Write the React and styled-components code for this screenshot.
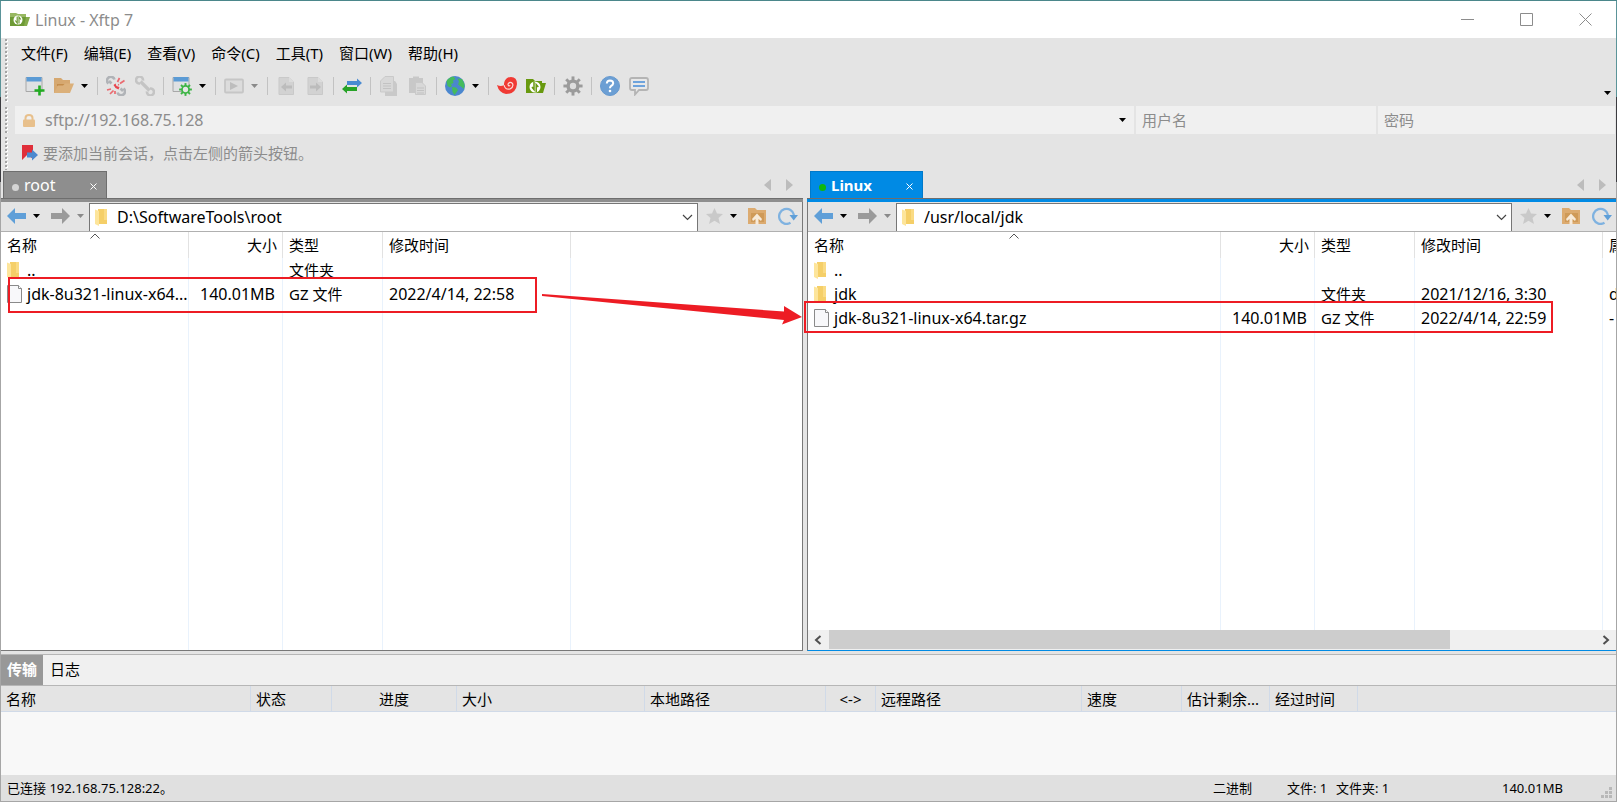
import React from "react";
import styled, { createGlobalStyle, css } from "styled-components";

const GlobalStyle = createGlobalStyle`
  *, *::before, *::after { box-sizing: border-box; }
  body { margin: 0; }
  body, button, input, table {
    font-family: "Noto Sans", "Noto Sans CJK SC", sans-serif;
    font-size: 15px;
    line-height: 20px;
    color: #000;
  }
  button { border: 0; padding: 0; background: none; }
  input { border: 0; padding: 0; outline: 0; background: none; min-width: 0; }
  svg { display: block; flex: none; }
`;

/* ---------- window frame ---------- */

const Window = styled.div`
  display: flex;
  flex-direction: column;
  min-height: 100vh;
  padding: 1px;
  background:
    linear-gradient(#4b878b, #4b878b) top / 100% 1px no-repeat,
    linear-gradient(#5b9499 0 97px, #3c3c40 97px 182px, #a6a6a6 182px);
`;

const TitleBar = styled.header`
  display: flex;
  align-items: center;
  height: 37px;
  padding: 0 1px 0 9px;
  background: #fff;
`;

const Title = styled.h1`
  margin: 0 auto 0 4px;
  font-size: 16px;
  font-weight: 400;
  color: #8c8c8c;
`;

const CaptionButton = styled.button`
  display: grid;
  place-items: center;
  width: 59px;
  height: 37px;
`;

const Chrome = styled.div`
  background: #e4e4e4;
`;

const Band = styled.div`
  display: flex;
  padding: ${(p) => p.$pad || "0"};
`;

const Grip = styled.span`
  flex: none;
  width: 3px;
  margin: 1px 7px 1px 4px;
  background:
    linear-gradient(#a4a4a4 0 2px, transparent 2px) 0 0 / 2px 4px repeat-y,
    linear-gradient(#fff 0 2px, transparent 2px) 1px 1px / 2px 4px repeat-y;
`;

const BandBody = styled.div`
  flex: 1;
  min-width: 0;
`;

const MenuBar = styled.nav`
  display: flex;
  gap: 16px;
  height: 31px;
  padding: 0 0 2px 6px;
  align-items: center;
`;

const MenuItem = styled.button`
  white-space: nowrap;
`;

const Toolbar = styled.div`
  display: flex;
  align-items: center;
  height: 34px;
  padding: 0 1px 0 5px;
`;

const ToolButton = styled.button`
  display: grid;
  place-items: center;
  width: 29px;
  height: 28px;
`;

const DropButton = styled.button`
  display: flex;
  align-items: center;
  width: 15px;
  height: 28px;
  padding-left: 3px;
`;

const OverflowButton = styled(DropButton)`
  align-items: flex-end;
  margin-left: auto;
  padding: 0 0 5px 4px;
`;

const Divider = styled.span`
  width: 1px;
  height: 18px;
  margin: 0 3px 0 4px;
  background: #c2c2c2;
`;

const AddressRow = styled.div`
  display: grid;
  grid-template-columns: minmax(0, 1119fr) minmax(0, 240fr) minmax(0, 237fr);
  gap: 2px;
  flex: 1;
  height: 28px;
  padding-right: 1px;
`;

const Field = styled.label`
  display: flex;
  align-items: center;
  min-width: 0;
  padding: 0 3px 0 ${(p) => p.$indent}px;
  background: #f0f0f0;
  input {
    flex: 1;
    color: #8c8c8c;
    font-size: ${(p) => p.$size || 15}px;
    margin-left: ${(p) => p.$gap || 0}px;
  }
  input::placeholder { color: #8c8c8c; opacity: 1; }
`;

const Hint = styled.p`
  display: flex;
  align-items: center;
  gap: 5px;
  flex: 1;
  height: 35px;
  margin: 0;
  padding: 0 0 1px 7px;
  color: #8c8c8c;
`;

/* ---------- file panes ---------- */

const Panes = styled.main`
  display: flex;
  gap: 4px;
  flex: 1;
  background: #e4e4e4;
`;

const Pane = styled.section`
  position: relative;
  display: flex;
  flex-direction: column;
  flex: ${(p) => p.$grow} 1 0;
  min-width: 0;
`;

const TabStrip = styled.div`
  display: flex;
  align-items: center;
  height: 27px;
  padding: 0 10px 0 ${(p) => (p.$remote ? 3 : 2)}px;
`;

const Tab = styled.div`
  display: flex;
  align-items: center;
  width: ${(p) => (p.$active ? 113 : 104)}px;
  height: 27px;
  padding: 0 4px 0 8px;
  border: 1px solid ${(p) => (p.$active ? "#0079c9" : "#6e6e6e")};
  border-bottom: 0;
  background: ${(p) => (p.$active ? "#008ae4" : "#8e8e8e")};
`;

const Dot = styled.span`
  width: 7px;
  height: 7px;
  margin-top: 4px;
  border-radius: 50%;
  background: ${(p) => p.$color};
`;

const TabLabel = styled.button`
  flex: 1;
  margin-left: 5px;
  text-align: left;
  font-size: ${(p) => (p.$active ? 15 : 16)}px;
  font-weight: ${(p) => (p.$active ? 700 : 400)};
  color: #fff;
`;

const TabClose = styled.button`
  display: grid;
  place-items: center;
  width: 18px;
  height: 18px;
  padding-top: 2px;
`;

const TabScroll = styled.div`
  display: flex;
  gap: 15px;
  margin-left: auto;
  button { width: 7px; }
`;

const PaneBar = styled.div`
  height: 4px;
  border-top: 1px solid #6e6e6e;
  background: ${(p) => (p.$active ? "#008ae4" : "#8e8e8e")};
`;

const PaneBody = styled.div`
  display: flex;
  flex-direction: column;
  flex: 1;
  min-height: 0;
  border-bottom: 1px solid ${(p) => (p.$active ? "#008ae4" : "#787878")};
  ${(p) =>
    p.$active
      ? css`border-left: 1px solid #787878;`
      : css`border-right: 1px solid #787878;`}
`;

const NavBar = styled.div`
  display: flex;
  height: 30px;
  padding-top: 1px;
  border-bottom: 1px solid #b0b0b0;
`;

const NavGroup = styled.div`
  display: flex;
  align-items: center;
  width: ${(p) => (p.$tools ? 104 : 88)}px;
  padding: 0 0 2px ${(p) => (p.$tools ? 8 : 6)}px;
  button { display: block; }
  button:nth-child(2) { margin-left: 7px; }
  button:nth-child(3) { margin-left: 11px; }
  button:nth-child(4) { margin-left: ${(p) => (p.$tools ? 12 : 7)}px; }
`;

const PathBox = styled.label`
  display: flex;
  align-items: center;
  flex: 1;
  min-width: 0;
  padding: 0 4px 0 5px;
  border: 1px solid #767676;
  border-bottom: 0;
  background: #fff;
  input {
    flex: 1;
    margin-left: 9px;
    padding-bottom: 2px;
    font-size: 16px;
  }
`;

const List = styled.div`
  display: grid;
  flex: 1;
  min-height: 0;
  background: #fff;
`;

const FileTable = styled.table`
  width: 100%;
  height: 100%;
  table-layout: fixed;
  border-collapse: separate;
  border-spacing: 0;
  th, td {
    height: 24px;
    padding: 0 6px;
    overflow: hidden;
    white-space: nowrap;
    text-align: left;
    font-weight: 400;
    border-right: 1px solid #e9f2fc;
  }
  th {
    position: relative;
    height: 26px;
    border-color: #e2e2e2;
  }
  td { font-size: 16px; }
  td:nth-child(3) { font-size: 15px; }
  th:nth-child(2), td:nth-child(2) { text-align: right; padding-right: 7px; }
  th:nth-child(2) { padding-right: 5px; }
  th:last-child, td:last-child { border-right: 0; }
  tr:last-child td { height: auto; }
`;

const SortMark = styled.span`
  position: absolute;
  top: 1px;
  left: 50%;
  margin-left: -5px;
`;

const NameCell = styled.span`
  display: flex;
  align-items: center;
  height: 24px;
  span { margin-left: ${(p) => p.$gap}px; }
`;

const ScrollBar = styled.div`
  display: flex;
  height: 20px;
  background: #f0f0f0;
  button { display: grid; place-items: center; width: 20px; height: 19px; }
`;

const ScrollTrack = styled.div`
  flex: 1;
  margin-left: 1px;
`;

const ScrollThumb = styled.div`
  width: 81%;
  height: 19px;
  background: #cdcdcd;
`;

const Highlight = styled.div`
  position: absolute;
  z-index: 2;
  left: ${(p) => p.$left}px;
  top: ${(p) => p.$top}px;
  width: ${(p) => p.$width}px;
  height: ${(p) => p.$height}px;
  border: 2px solid #ed1c24;
  pointer-events: none;
`;

const ArrowMark = styled.svg`
  position: absolute;
  z-index: 2;
  right: 0;
  top: 119px;
  pointer-events: none;
`;

/* ---------- transfer panel ---------- */

const Transfers = styled.section`
  padding-top: 3px;
  background: #e4e4e4;
`;

const PanelTabs = styled.div`
  display: flex;
  height: 32px;
  border-top: 1px solid #b6b6b6;
  border-bottom: 1px solid #b6b6b6;
  background: #f0f0f0;
`;

const PanelTab = styled.button`
  width: ${(p) => (p.$active ? 42 : 44)}px;
  padding-bottom: 2px;
  font-weight: ${(p) => (p.$active ? 700 : 400)};
  color: ${(p) => (p.$active ? "#fff" : "#000")};
  background: ${(p) => (p.$active ? "#989898" : "none")};
`;

const TransferBody = styled.div`
  height: 89px;
  background: #f8f8f8;
`;

const TransferTable = styled.table`
  width: 100%;
  table-layout: fixed;
  border-collapse: separate;
  border-spacing: 0;
  background: #e4e4e4;
  th {
    height: 26px;
    padding: 0 5px;
    overflow: hidden;
    white-space: nowrap;
    font-weight: 400;
    text-align: left;
    border-right: 1px solid #d0dae8;
    border-bottom: 1px solid #d0dae8;
  }
  th:nth-child(3), th:nth-child(6) { text-align: center; }
  th:last-child { border-right: 0; }
`;

const StatusBar = styled.footer`
  display: flex;
  align-items: center;
  height: 26px;
  padding: 0 3px 0 6px;
  background: #e0e0e0;
  font-size: 13px;
`;

const StatusCell = styled.span`
  width: ${(p) => p.$width}px;
  white-space: pre;
`;

const StatusMain = styled.span`
  flex: 1;
`;

const GripSlot = styled.span`
  align-self: flex-end;
`;

/* ---------- icons ---------- */

const Caret = ({ color = "#000" }) => (
  <svg width="7" height="4" viewBox="0 0 7 4">
    <path d="M0 0H7L3.5 4Z" fill={color} />
  </svg>
);

const AppIcon = () => (
  <svg width="21" height="15" viewBox="0 0 21 15">
    <path d="M0 1H6L8 2H16V13H0Z" fill="#98b862" />
    <path d="M0 5H16V14H0Z" fill="#6d9a35" />
    <path d="M16 5H20L17 14H14Z" fill="#86ab4c" />
    <circle cx="8" cy="8" r="4.5" fill="#fff" />
    <path d="M7.200 4.500V11L5.300 8.500M9 11.500V5L10.800 7.500" stroke="#6d9a35" strokeWidth="1.200" fill="none" />
  </svg>
);

const FolderGreen = () => (
  <svg width="20" height="20" viewBox="0 0 20 20">
    <path d="M0 3H7L9 5H16V17H0Z" fill="#68990f" />
    <path d="M16 7H20L17 17H15Z" fill="#68990f" />
    <circle cx="9" cy="11" r="5.500" fill="#fff" />
    <path d="M8 6V13.500L6 11M10.200 16V8.500L12.300 11" stroke="#68990f" strokeWidth="1.500" fill="none" />
  </svg>
);

const windowShape = (
  <>
    <path d="M1 1.500H17V15.500H1Z" fill="#dfe1e3" stroke="#a8a8a8" />
    <path d="M1.500 1H16.500V5.500H1.500Z" fill="#5b9bd5" />
  </>
);

const NewWindow = () => (
  <svg width="20" height="20" viewBox="0 0 20 20">
    {windowShape}
    <path d="M14.500 9.500V19.500M9.500 14.500H19.500" stroke="#22ac22" strokeWidth="2.600" />
  </svg>
);

const OpenFolder = () => (
  <svg width="20" height="20" viewBox="0 0 20 20">
    <path d="M0 2H7L9 4H16V17H0Z" fill="#d6a870" />
    <path d="M3 8H17V10H3Z" fill="#c48d4c" />
    <path d="M4 9.500H9L11 7.500H20L16 17H0Z" fill="#dbb07a" />
  </svg>
);

const BrokenLink = () => (
  <svg width="20" height="20" viewBox="0 0 20 20">
    <g fill="none" stroke="#b0b3b7" strokeWidth="2.600">
      <path d="M2.500 7.500A3.800 3.800 0 1 1 8.500 3.500" />
      <path d="M3 5L5.500 7.500" />
      <path d="M17.500 12.500A3.800 3.800 0 1 1 11.500 16.500" />
      <path d="M17 15L14.500 12.500" />
    </g>
    <path d="M11.500 6L13.500 2M14 7.500L18.500 4.500M12 8.500L13 9M1 14L5 13M4 18L7.500 14.500M9 18V15" stroke="#ea6a70" strokeWidth="1.700" />
    <path d="M7.500 9L9.500 7.500L10.500 10L13.500 11L12.500 13.500L9.500 12Z" fill="#e8454e" />
  </svg>
);

const Link = () => (
  <svg width="20" height="20" viewBox="0 0 20 20">
    <g fill="none" stroke="#c4c4c4" strokeWidth="2.600">
      <path d="M5 7.500A3.500 3.500 0 1 1 8 4.500" />
      <path d="M15 12.500A3.500 3.500 0 1 1 12 15.500" />
      <path d="M5.500 5.500L14.500 14.500" strokeWidth="3.200" />
    </g>
  </svg>
);

const teeth = Array.from({ length: 8 }, (_, i) => i * 45);

const Gear = ({ cx, cy, r, color, hole, inner = 0.48 }) => (
  <g>
    {teeth.map((a) => (
      <rect key={a} x={cx - r * 0.22} y={cy - r * 1.45} width={r * 0.44} height={r * 0.7} fill={color} transform={`rotate(${a} ${cx} ${cy})`} />
    ))}
    <circle cx={cx} cy={cy} r={r} fill={color} />
    <circle cx={cx} cy={cy} r={r * inner} fill={hole} />
  </g>
);

const WindowGear = () => (
  <svg width="20" height="20" viewBox="0 0 20 20">
    {windowShape}
    <Gear cx={13.5} cy={13.5} r={4.4} color="#3db545" hole="#e6e6e6" inner={0.6} />
  </svg>
);

const PlayBox = () => (
  <svg width="20" height="20" viewBox="0 0 20 20">
    <rect x="1" y="3.500" width="18" height="13" rx="1" fill="#dcdcdc" stroke="#c6c6c6" strokeWidth="1.800" />
    <path d="M6 6L14 10L6 14Z" fill="#bdbdbd" />
  </svg>
);

const PageArrow = ({ flip }) => (
  <svg width="20" height="20" viewBox="0 0 20 20">
    <path d="M3 1.500H13L17.500 6V18.500H3Z" fill="#d2d2d2" stroke="#c9c9c9" />
    <path d="M13 1V6H18Z" fill="#dcdcdc" />
    <path d="M5 11L10 6.500V9.500H16V12.500H10V15.500Z" fill="#bcbcbc" transform={flip ? "rotate(180 10.5 11)" : undefined} />
  </svg>
);

const Swap = () => (
  <svg width="20" height="20" viewBox="0 0 20 20">
    <path d="M20 7L15 2.500V5H5V9H15V11.500Z" fill="#4a8bd2" />
    <path d="M0 13L5 8.500V11H15V15H5V17.500Z" fill="#27a327" />
  </svg>
);

const Pages = ({ paste }) => (
  <svg width="20" height="20" viewBox="0 0 20 20">
    {paste ? <path d="M1 2H5V0.500H11V2H15V17H1Z" fill="#c8c8c8" /> : <path d="M6 5H16L18 8V20H6Z" fill="#c9c9c9" />}
    <path d={paste ? "M7.500 6.500H14L17.500 10V18.500H7.500Z" : "M6 0.500H14.500V16H1.500V5Z"} fill="#d8d8d8" stroke="#c9c9c9" />
    <path d={paste ? "M9 12H16M9 14.500H16M9 17H16" : "M4 7.500H12M4 10H12M4 12.500H12"} stroke="#c2c2c2" />
  </svg>
);

const Globe = () => (
  <svg width="20" height="20" viewBox="0 0 20 20">
    <circle cx="10" cy="10" r="10" fill="#4b87cf" />
    <path d="M1.500 5Q4 1 8.500 0.500L10.500 3L8 4.500L8.500 7L6 8L7 10L5 11.500L2.500 10Z" fill="#45bb5c" />
    <path d="M7 11L11 11.500L13 14L11 17L9.500 19L7.500 16Z" fill="#45bb5c" />
    <path d="M12.500 2.500L17 3L19.500 8L19 13L16.500 11L13 8.500L14 5.500Z" fill="#45bb5c" />
  </svg>
);

const Shell = () => (
  <svg width="20" height="20" viewBox="0 0 20 20">
    <path d="M0 9Q4 11 7 9C7 4 10 1 14 1Q20 1 20 8Q19 18 9 18Q2 17 0 9Z" fill="#f03a34" />
    <path d="M7 9Q8 14 13 13Q17 11 15.500 7.500Q13 5 11 8Q11 10.500 13.300 9.500" fill="none" stroke="#fbd9d6" strokeWidth="1.200" />
  </svg>
);

const Settings = () => (
  <svg width="20" height="20" viewBox="0 0 20 20">
    <Gear cx={10} cy={10} r={6.6} color="#9b9b9b" hole="#dedede" />
  </svg>
);

const Help = () => (
  <svg width="20" height="20" viewBox="0 0 20 20">
    <circle cx="10" cy="10" r="9.500" fill="#6c9fd4" stroke="#6699ce" />
    <path d="M6.800 7.500Q7 4.500 10 4.500Q13.200 4.600 13.200 7.300Q13 9 11 10Q10 10.800 10 12.300" fill="none" stroke="#fff" strokeWidth="2" />
    <circle cx="10" cy="15" r="1.300" fill="#fff" />
  </svg>
);

const Chat = () => (
  <svg width="20" height="20" viewBox="0 0 20 20">
    <path d="M3 2H17Q19 2 19 4V12Q19 14 17 14H10L6 18.500V14H3Q1 14 1 12V4Q1 2 3 2Z" fill="#e8e8e8" stroke="#b4b4b4" strokeWidth="1.800" />
    <path d="M4 6H16M4 10H16" stroke="#6ea3dc" strokeWidth="2" />
  </svg>
);

const Lock = () => (
  <svg width="12" height="13" viewBox="0 0 12 13">
    <path d="M2.500 6V4Q2.500 1 6 1Q9.500 1 9.500 4V6" fill="none" stroke="#e8c08c" strokeWidth="2" />
    <rect y="5.500" width="12" height="7.500" rx="1" fill="#e8c08c" />
  </svg>
);

const BookmarkArrow = () => (
  <svg width="16" height="16" viewBox="0 0 16 16">
    <path d="M0 0H11V14L5.500 9.500L0 15Z" fill="#e02f3a" />
    <path d="M5 7.500H10V4.500L16 10L10 15.500V12.500H5Z" fill="#4b89cf" />
  </svg>
);

const NavArrow = ({ flip }) => (
  <svg width="19" height="16" viewBox="0 0 19 16">
    <path d="M0 8L8 0V5H19V11H8V16Z" fill={flip ? "#9a9a9a" : "#5f9fd8"} transform={flip ? "rotate(180 9.5 8)" : undefined} />
  </svg>
);

const YellowFolder = () => (
  <svg width="13" height="17" viewBox="0 0 13 17">
    <path d="M3 0H12V15H3Z" fill="#f5cf68" />
    <path d="M9 0H12V11H9Z" fill="#fadb84" />
    <path d="M0 0.500L4 2V17L0 15Z" fill="#fde59b" />
  </svg>
);

const FileIcon = () => (
  <svg width="15" height="18" viewBox="0 0 15 18">
    <path d="M0.500 0.500H11.500L14.500 3.500V17.500H0.500Z" fill="#f8f8fa" stroke="#8a8a8a" />
    <path d="M11.500 0.500V3.500H14.500" fill="#fff" stroke="#8a8a8a" />
  </svg>
);

const Star = () => (
  <svg width="17" height="16" viewBox="0 0 17 16">
    <path d="M8.500 0L11 5.500L17 6L12.500 10L14 16L8.500 12.800L3 16L4.500 10L0 6L6 5.500Z" fill="#c9c9c9" />
  </svg>
);

const FolderUp = () => (
  <svg width="18" height="17" viewBox="0 0 18 17">
    <path d="M0 0H7L9 2H18V16H0Z" fill="#dcab70" />
    <path d="M3 5H16V14H3Z" fill="#cf9a58" />
    <path d="M9 5.500L14 11L13 13L10.500 11V16.500H7.500V11L5 13L4 11Z" fill="#f7ead9" />
  </svg>
);

const Refresh = () => (
  <svg width="20" height="18" viewBox="0 0 20 18">
    <path d="M12.500 15.800A7.500 7.500 0 1 1 16 8" fill="none" stroke="#7fb2e0" strokeWidth="2.300" />
    <path d="M11.500 8H20L15.700 13.500Z" fill="#5f9fd8" />
  </svg>
);

const Chevron = () => (
  <svg width="11" height="7" viewBox="0 0 11 7">
    <path d="M1 1L5.500 5.500L10 1" fill="none" stroke="#444" strokeWidth="1.200" />
  </svg>
);

const Cross = () => (
  <svg width="7" height="7" viewBox="0 0 7 7">
    <path d="M0.500 0.500L6.500 6.500M6.500 0.500L0.500 6.500" stroke="#fff" />
  </svg>
);

const Triangle = ({ flip }) => (
  <svg width="7" height="12" viewBox="0 0 7 12">
    <path d={flip ? "M0 0L7 6L0 12Z" : "M7 0L0 6L7 12Z"} fill="#bcbcbc" />
  </svg>
);

const ScrollArrow = ({ flip }) => (
  <svg width="8" height="10" viewBox="0 0 8 10">
    <path d={flip ? "M1.500 1L6 5L1.500 9" : "M6.500 1L2 5L6.500 9"} fill="none" stroke="#505050" strokeWidth="2" />
  </svg>
);

const SizeGrip = () => (
  <svg width="12" height="14" viewBox="0 0 12 14" fill="#b8b8b8">
    <path d="M8 0H11V3H8ZM4 4H7V7H4ZM8 4H11V7H8ZM0 8H3V11H0ZM4 8H7V11H4ZM8 8H11V11H8Z" />
  </svg>
);

/* ---------- data ---------- */

const menus = ["文件(F)", "编辑(E)", "查看(V)", "命令(C)", "工具(T)", "窗口(W)", "帮助(H)"];

const tools = [
  ["新建", <NewWindow />], ["打开", <OpenFolder />], "drop", "|",
  ["断开", <BrokenLink />], ["重新连接", <Link />], "|",
  ["属性", <WindowGear />], "drop", "|",
  ["运行", <PlayBox />], "dropOff", "|",
  ["传输到左侧", <PageArrow />], ["传输到右侧", <PageArrow flip />], "|",
  ["同步", <Swap />], "|",
  ["复制", <Pages />], ["粘贴", <Pages paste />], "|",
  ["编码", <Globe />], "drop", "|",
  ["Xshell", <Shell />], ["Xftp", <FolderGreen />], "|",
  ["选项", <Settings />], "|",
  ["帮助", <Help />], ["反馈", <Chat />],
];

const transferColumns = [
  ["名称", 250], ["状态", 81], ["进度", 125], ["大小", 188], ["本地路径", 181],
  ["<->", 50], ["远程路径", 206], ["速度", 100], ["估计剩余...", 88], ["经过时间", 88], ["", null],
];

const localPane = {
  tab: "root",
  path: "D:\\SoftwareTools\\root",
  widths: [188, 94, 100, 188, null],
  headers: ["名称", "大小", "类型", "修改时间", ""],
  rows: [
    { folder: true, cells: ["..", "", "文件夹", "", ""] },
    { cells: ["jdk-8u321-linux-x64...", "140.01MB", "GZ 文件", "2022/4/14, 22:58", ""] },
  ],
};

const remotePane = {
  tab: "Linux",
  path: "/usr/local/jdk",
  widths: [null, 94, 100, 188, 13],
  headers: ["名称", "大小", "类型", "修改时间", "属性"],
  rows: [
    { folder: true, cells: ["..", "", "", "", ""] },
    { folder: true, cells: ["jdk", "", "文件夹", "2021/12/16, 3:30", "d"] },
    { cells: ["jdk-8u321-linux-x64.tar.gz", "140.01MB", "GZ 文件", "2022/4/14, 22:59", "-"] },
  ],
};

/* ---------- parts ---------- */

function ToolItem({ item }) {
  if (item === "|") return <Divider />;
  if (item === "drop" || item === "dropOff") {
    return (
      <DropButton aria-label="更多">
        <Caret color={item === "drop" ? "#000" : "#8a8a8a"} />
      </DropButton>
    );
  }
  return <ToolButton aria-label={item[0]}>{item[1]}</ToolButton>;
}

function FilePane({ data, remote, grow, children }) {
  return (
    <Pane $grow={grow}>
      <TabStrip $remote={remote}>
        <Tab $active={remote}>
          <Dot $color={remote ? "#0fb80f" : "#d4d4d4"} />
          <TabLabel $active={remote}>{data.tab}</TabLabel>
          <TabClose aria-label="关闭"><Cross /></TabClose>
        </Tab>
        <TabScroll>
          <button aria-label="向左"><Triangle /></button>
          <button aria-label="向右"><Triangle flip /></button>
        </TabScroll>
      </TabStrip>
      <PaneBar $active={remote} />
      <PaneBody $active={remote}>
        <NavBar>
          <NavGroup>
            <button aria-label="后退"><NavArrow /></button>
            <button aria-label="后退记录"><Caret /></button>
            <button aria-label="前进"><NavArrow flip /></button>
            <button aria-label="前进记录"><Caret color="#8a8a8a" /></button>
          </NavGroup>
          <PathBox>
            <YellowFolder />
            <input aria-label="路径" defaultValue={data.path} />
            <button aria-label="展开路径"><Chevron /></button>
          </PathBox>
          <NavGroup $tools>
            <button aria-label="收藏"><Star /></button>
            <button aria-label="收藏夹"><Caret /></button>
            <button aria-label="上级目录"><FolderUp /></button>
            <button aria-label="刷新"><Refresh /></button>
          </NavGroup>
        </NavBar>
        <List>
          <FileTable>
            <colgroup>
              {data.widths.map((w, i) => <col key={i} width={w || undefined} />)}
            </colgroup>
            <thead>
              <tr>
                {data.headers.map((h, i) => (
                  <th key={i}>
                    {h}
                    {i === 0 && (
                      <SortMark>
                        <svg width="10" height="6" viewBox="0 0 10 6">
                          <path d="M0.500 5.500L5 1L9.500 5.500" fill="none" stroke="#555" />
                        </svg>
                      </SortMark>
                    )}
                  </th>
                ))}
              </tr>
            </thead>
            <tbody>
              {data.rows.map((row) => (
                <tr key={row.cells[0]}>
                  {row.cells.map((c, i) => (
                    <td key={i}>
                      {i === 0 ? (
                        <NameCell $gap={row.folder ? 7 : 5}>
                          {row.folder ? <YellowFolder /> : <FileIcon />}
                          <span>{c}</span>
                        </NameCell>
                      ) : c}
                    </td>
                  ))}
                </tr>
              ))}
              <tr>{data.headers.map((_, i) => <td key={i} />)}</tr>
            </tbody>
          </FileTable>
        </List>
        {remote && (
          <ScrollBar>
            <button aria-label="向左滚动"><ScrollArrow /></button>
            <ScrollTrack><ScrollThumb /></ScrollTrack>
            <button aria-label="向右滚动"><ScrollArrow flip /></button>
          </ScrollBar>
        )}
      </PaneBody>
      {children}
    </Pane>
  );
}

export default function App() {
  return (
    <>
      <GlobalStyle />
      <Window>
        <TitleBar>
          <AppIcon />
          <Title>Linux - Xftp 7</Title>
          <CaptionButton aria-label="最小化">
            <svg width="13" height="13" viewBox="0 0 13 13"><path d="M0 6.500H13" stroke="#8c8c8c" /></svg>
          </CaptionButton>
          <CaptionButton aria-label="最大化">
            <svg width="13" height="13" viewBox="0 0 13 13"><path d="M0.500 0.500H12.500V12.500H0.500Z" fill="none" stroke="#8c8c8c" /></svg>
          </CaptionButton>
          <CaptionButton aria-label="关闭窗口">
            <svg width="13" height="13" viewBox="0 0 13 13"><path d="M0.500 0.500L12.500 12.500M12.500 0.500L0.500 12.500" stroke="#8c8c8c" /></svg>
          </CaptionButton>
        </TitleBar>

        <Chrome>
          <Band>
            <Grip />
            <BandBody>
              <MenuBar>{menus.map((m) => <MenuItem key={m}>{m}</MenuItem>)}</MenuBar>
              <Toolbar>
                {tools.map((t, i) => <ToolItem key={i} item={t} />)}
                <OverflowButton aria-label="工具栏选项"><Caret /></OverflowButton>
              </Toolbar>
            </BandBody>
          </Band>
          <Band $pad="3px 0 0">
            <Grip />
            <AddressRow>
              <Field $indent={8} $gap={10} $size={16}>
                <Lock />
                <input aria-label="主机地址" defaultValue="sftp://192.168.75.128" />
                <DropButton aria-label="历史记录"><Caret /></DropButton>
              </Field>
              <Field $indent={6}><input aria-label="用户名" placeholder="用户名" /></Field>
              <Field $indent={6}><input aria-label="密码" type="password" placeholder="密码" /></Field>
            </AddressRow>
          </Band>
          <Band $pad="2px 0 0">
            <Grip />
            <Hint><BookmarkArrow />要添加当前会话，点击左侧的箭头按钮。</Hint>
          </Band>
        </Chrome>

        <Panes>
          <FilePane data={localPane} grow={802}>
            <Highlight $left={7} $top={106} $width={529} $height={36} />
            <ArrowMark width="262" height="38" viewBox="0 0 262 38">
              <path d="M1 4L243 21.500V16L261 27L241 34.500L243 30L1 6Z" fill="#ed1c24" />
            </ArrowMark>
          </FilePane>
          <FilePane data={remotePane} remote grow={809}>
            <Highlight $left={-3} $top={130} $width={749} $height={32} />
          </FilePane>
        </Panes>

        <Transfers>
          <PanelTabs>
            <PanelTab $active>传输</PanelTab>
            <PanelTab>日志</PanelTab>
          </PanelTabs>
          <TransferBody>
            <TransferTable>
              <colgroup>
                {transferColumns.map(([n, w]) => <col key={n} width={w || undefined} />)}
              </colgroup>
              <thead>
                <tr>{transferColumns.map(([n]) => <th key={n}>{n}</th>)}</tr>
              </thead>
            </TransferTable>
          </TransferBody>
        </Transfers>
        <StatusBar>
          <StatusMain>已连接 192.168.75.128:22。</StatusMain>
          <StatusCell $width={74}>二进制</StatusCell>
          <StatusCell $width={49}>文件: 1</StatusCell>
          <StatusCell $width={166}>文件夹: 1</StatusCell>
          <StatusCell $width={99}>140.01MB</StatusCell>
          <GripSlot><SizeGrip /></GripSlot>
        </StatusBar>
      </Window>
    </>
  );
}
